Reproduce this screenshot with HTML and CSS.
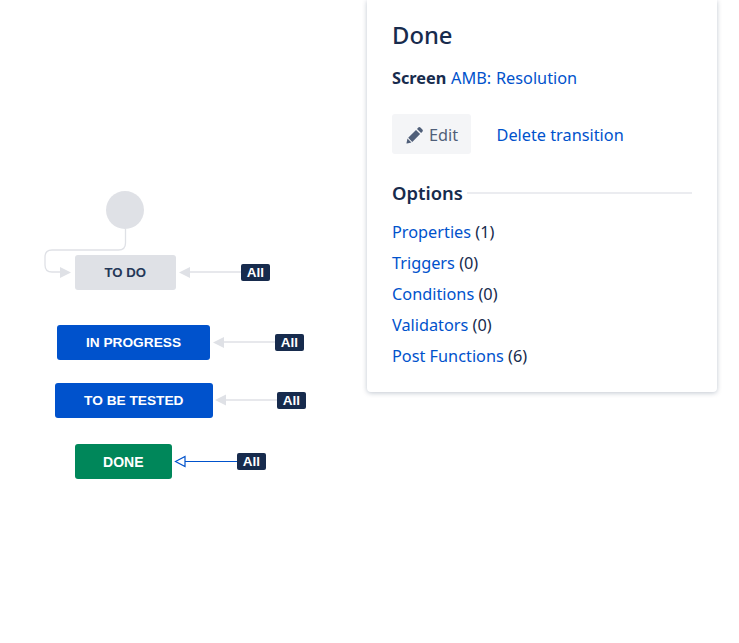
FILE: index.html
```html
<!DOCTYPE html>
<html lang="en">
<head>
<meta charset="utf-8">
<title>Transition: Done</title>
<link rel="stylesheet" href="styles.css">
</head>
<body>
<main class="page">
  <section class="diagram">
    <svg class="wires" width="366" height="643" viewBox="0 0 366 643" aria-hidden="true">
      <g fill="none" stroke="#dfe1e6" stroke-width="1.3">
        <path d="M125.5 229V243Q125.5 250 118.5 250H52Q45 250 45 257V265Q45 272 52 272H62"/>
        <path d="M188 272H241"/>
        <path d="M222 342H275"/>
        <path d="M224 400H277"/>
      </g>
      <g fill="#dfe1e6">
        <path d="M60 267L71 272.500L60 278Z"/>
        <path d="M179 272.500L190 267V278Z"/>
        <path d="M213 342.500L224 337V348Z"/>
        <path d="M215 400L226 394.500V405.500Z"/>
      </g>
      <path d="M185 461.500H237" fill="none" stroke="#0052cc" stroke-width="1.2"/>
      <path d="M175.500 461.500L185 456.500V466.500Z" fill="#fff" stroke="#0052cc" stroke-width="1.2"/>
      <circle cx="125" cy="210" r="19" fill="#dfe1e6"/>
    </svg>
    <div class="node node-todo">TO DO</div>
    <div class="node node-progress">IN PROGRESS</div>
    <div class="node node-tested">TO BE TESTED</div>
    <div class="node node-done">DONE</div>
    <span class="badge badge-1">All</span>
    <span class="badge badge-2">All</span>
    <span class="badge badge-3">All</span>
    <span class="badge badge-4">All</span>
  </section>
  <aside class="panel">
    <h1 class="title">Done</h1>
    <p class="screen"><strong>Screen</strong> <a href="#">AMB: Resolution</a></p>
    <div class="actions">
      <button class="edit" type="button">
        <svg class="pencil" width="18" height="18" viewBox="0 0 18 18" aria-hidden="true">
          <path d="M12.300 1.600a1.500 1.500 0 0 1 2.100 0l2 2a1.500 1.500 0 0 1 0 2.100l-1.300 1.300-4.100-4.100zM10 4l4.100 4.100-7.800 7.800-4.100-4.100zM1.500 12.600l3.900 3.900-4.400 1a.4.400 0 0 1-.5-.5z" fill="#505f79"/>
        </svg>
        <span>Edit</span>
      </button>
      <a class="delete" href="#">Delete transition</a>
    </div>
    <div class="options-head"><h2>Options</h2><span class="rule"></span></div>
    <ul class="options">
      <li><a href="#">Properties</a> (1)</li>
      <li><a href="#">Triggers</a> (0)</li>
      <li><a href="#">Conditions</a> (0)</li>
      <li><a href="#">Validators</a> (0)</li>
      <li><a href="#">Post Functions</a> (6)</li>
    </ul>
  </aside>
</main>
</body>
</html>
```
FILE: styles.css
```css
* { box-sizing: border-box; }
html, body { margin: 0; height: 100%; background: #fff; overflow: hidden; }
body { font-family: "Noto Sans", "Open Sans", sans-serif; color: #172b4d; }
a { color: #0052cc; text-decoration: none; }
.page { display: flex; align-items: flex-start; width: 739px; height: 643px; }

.diagram { position: relative; flex: 0 0 367px; height: 643px; }
.wires { position: absolute; left: 0; top: 0; }
.node {
  position: absolute; display: flex; align-items: center; justify-content: center;
  font-family: "Liberation Sans", Arial, sans-serif; font-size: 13.7px; font-weight: 700;
  border-radius: 3px; color: #fff; height: 35px;
}
.node-todo { left: 74.500px; top: 255px; width: 101.500px; background: #dfe1e6; color: #253858; font-size: 13.200px; }
.node-progress { left: 57px; top: 325px; width: 153px; background: #0052cc; }
.node-tested { left: 55px; top: 382.500px; width: 157.500px; background: #0052cc; }
.node-done { left: 74.500px; top: 444px; width: 97.500px; background: #00875a; font-size: 14px; }
.badge {
  position: absolute; width: 29px; height: 17px; border-radius: 2px; background: #172b4d; color: #fff;
  font-family: "Liberation Sans", Arial, sans-serif; font-size: 13.500px; font-weight: 700; line-height: 17px; text-align: center;
}
.badge-1 { left: 241px; top: 264px; }
.badge-2 { left: 275px; top: 334px; }
.badge-3 { left: 277px; top: 392px; }
.badge-4 { left: 237px; top: 453px; }

.panel {
  flex: 0 0 350px; height: 392px; padding: 20px 25px 0 25px; background: #fff;
  border-radius: 0 0 4px 4px; box-shadow: 0 1px 5px rgba(9, 30, 66, .25);
}
.title { margin: 0; font-size: 23.800px; font-weight: 500; line-height: 30px; color: #172b4d; }
.screen { margin: 16px 0 0; font-size: 16.300px; line-height: 24px; word-spacing: 0.5px; }
.screen strong { font-weight: 700; }
.actions { display: flex; align-items: center; gap: 25.500px; margin-top: 24px; }
.edit {
  display: flex; align-items: center; gap: 5px; width: 79px; height: 40px; padding: 2px 0 0 14px;
  border: 0; border-radius: 3px; background: #f4f5f7; color: #505f79;
  font: inherit; font-size: 16.300px;
}
.pencil { flex: none; }
.delete { font-size: 16.300px; padding-top: 2px; }
.options-head { display: flex; align-items: center; gap: 4px; margin-top: 25px; }
.options-head h2 { margin: 0; font-size: 18.400px; font-weight: 600; line-height: 28px; }
.rule { flex: 1; height: 2px; background: #ebecf0; }
.options { list-style: none; margin: 9.500px 0 0; padding: 0; font-size: 16.300px; line-height: 31.200px; }
```
